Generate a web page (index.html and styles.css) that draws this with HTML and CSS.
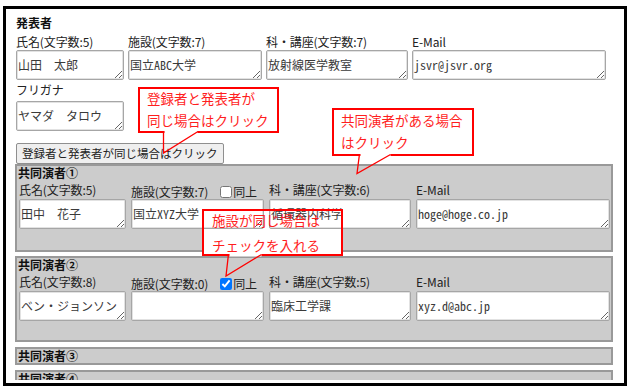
FILE: index.html
```html
<!DOCTYPE html>
<html lang="ja">
<head>
    <meta charset="utf-8">
    <title>発表者登録</title>
    <link rel="stylesheet" href="styles.css">
</head>
<body>
    <div class="frame">
        <div class="page">
            <div class="presenter">
                <h2 class="block-title">発表者</h2>
                <div class="fields">
                    <div class="field f-name">
                        <label>氏名(文字数:5)</label>
                        <textarea>山田　太郎</textarea>
                    </div>
                    <div class="field f-inst">
                        <label>施設(文字数:7)</label>
                        <textarea>国立ABC大学</textarea>
                    </div>
                    <div class="field f-dept">
                        <label>科・講座(文字数:7)</label>
                        <textarea>放射線医学教室</textarea>
                    </div>
                    <div class="field f-mail">
                        <label>E-Mail</label>
                        <textarea>jsvr@jsvr.org</textarea>
                    </div>
                </div>
                <div class="field f-name kana">
                    <label>フリガナ</label>
                    <textarea>ヤマダ　タロウ</textarea>
                </div>
                <button type="button" class="copy-btn">登録者と発表者が同じ場合はクリック</button>
            </div>

            <div class="co co-first">
                <h3 class="co-title">共同演者①</h3>
                <div class="fields">
                    <div class="field f-name">
                        <label>氏名(文字数:5)</label>
                        <textarea>田中　花子</textarea>
                    </div>
                    <div class="field f-inst">
                        <div class="label-line">
                            <label>施設(文字数:7)</label>
                            <input type="checkbox" id="same1">
                            <label for="same1">同上</label>
                        </div>
                        <textarea>国立XYZ大学</textarea>
                    </div>
                    <div class="field f-dept">
                        <label>科・講座(文字数:6)</label>
                        <textarea>循環器内科学</textarea>
                    </div>
                    <div class="field f-mail">
                        <label>E-Mail</label>
                        <textarea>hoge@hoge.co.jp</textarea>
                    </div>
                </div>
            </div>

            <div class="co">
                <h3 class="co-title">共同演者②</h3>
                <div class="fields">
                    <div class="field f-name">
                        <label>氏名(文字数:8)</label>
                        <textarea>ベン・ジョンソン</textarea>
                    </div>
                    <div class="field f-inst">
                        <div class="label-line">
                            <label>施設(文字数:0)</label>
                            <input type="checkbox" id="same2" checked>
                            <label for="same2">同上</label>
                        </div>
                        <textarea></textarea>
                    </div>
                    <div class="field f-dept">
                        <label>科・講座(文字数:5)</label>
                        <textarea>臨床工学課</textarea>
                    </div>
                    <div class="field f-mail">
                        <label>E-Mail</label>
                        <textarea>xyz.d@abc.jp</textarea>
                    </div>
                </div>
            </div>

            <div class="co closed">
                <h3 class="co-title">共同演者③</h3>
            </div>
            <div class="co closed">
                <h3 class="co-title">共同演者④</h3>
            </div>

            <!-- annotations -->
            <div class="note note-copy"><div class="note-body"><p>登録者と発表者が<br>同じ場合はクリック</p></div></div>
            <div class="note note-co"><div class="note-body"><p>共同演者がある場合<br>はクリック</p></div></div>
            <div class="note note-same"><div class="note-body"><p>施設が同じ場合は<br>チェックを入れる</p></div></div>

            <svg class="tails" width="618" height="371" viewBox="0 0 618 371">
                <rect x="158.5" y="121.5" width="33" height="3" fill="#fff"/>
                <polyline points="157.5,122 157.5,144 192,122.5" fill="none" stroke="#f00" stroke-width="1.3"/>
                <rect x="354.5" y="144.5" width="30" height="3" fill="#fff"/>
                <polyline points="353.5,145 351,164.5 384.5,145.5" fill="none" stroke="#f00" stroke-width="1.3"/>
                <rect x="223.5" y="244.5" width="32" height="3" fill="#fff"/>
                <polyline points="222.5,245 220,267 255.5,245.5" fill="none" stroke="#f00" stroke-width="1.3"/>
            </svg>
        </div>
    </div>
</body>
</html>
```

FILE: styles.css
```css
body {
    margin: 0;
    background-color: #fff;
    font-family: "Noto Sans CJK JP", "Noto Sans", sans-serif;
    font-size: 12px;
    color: #222;
}

.frame {
    width: 624px;
    height: 380px;
    margin: 6px 0 0 3px;
    border: 3px solid #000;
    padding-bottom: 3px;
    box-sizing: border-box;
}

.page {
    position: relative;
    height: 100%;
    overflow: hidden;
    padding: 7px 11px 0 9px;
    box-sizing: border-box;
}

.presenter {
    padding-left: 1px;
}

.block-title,
.co-title {
    margin: 0;
    font-size: 12px;
    font-weight: bold;
    line-height: 14px;
    height: 14px;
    color: #111;
}

.fields {
    display: flex;
    gap: 4px;
    margin-top: 5px;
}

.field {
    display: flex;
    flex-direction: column;
}

.field label {
    display: block;
    line-height: 14px;
    height: 14px;
    white-space: nowrap;
    letter-spacing: -0.1px;
}

.f-name { width: 108px; }
.f-inst { width: 134px; }
.f-dept { width: 142px; }
.f-mail { width: 194px; }

textarea {
    position: relative;
    z-index: 1;
    display: block;
    width: 100%;
    height: 30px;
    margin: 1px 0 0;
    padding: 6px 1px;
    box-sizing: border-box;
    border: 1px solid #a6a6a6;
    border-radius: 2px;
    box-shadow: inset 0 0 0 1px #e2e2e2;
    background-color: #fff;
    font-family: "Noto Sans Mono CJK JP", "Liberation Mono", "Noto Sans CJK JP", monospace;
    font-size: 12px;
    line-height: 16px;
    color: #3a3a3a;
    overflow: hidden;
    white-space: nowrap;
}

.kana {
    margin-top: 3px;
}

.kana textarea {
    margin-top: 4px;
}

.copy-btn {
    display: block;
    height: 21px;
    margin-top: 12px;
    padding: 0 5px;
    border: 1px solid #8f8f8f;
    border-radius: 2px;
    background-color: #efefef;
    font-family: "Noto Sans CJK JP", sans-serif;
    font-size: 11.5px;
    line-height: 19px;
    color: #222;
}

/* co-presenter blocks */
.co {
    margin-top: 5px;
    padding: 0 1px 19px;
    border: 2px solid #999;
    background-color: #ccc;
}

.co-first {
    margin-top: 0;
    padding-bottom: 21px;
}

.co-first + .co {
    margin-top: 4px;
}

.co.closed {
    padding-bottom: 0;
}

.co .fields {
    gap: 5px;
    margin: 3px 0 0 1px;
}

.co .f-name { width: 107px; }
.co .f-inst { width: 133px; }

.co textarea {
    margin-top: 2px;
}

.label-line {
    display: flex;
    align-items: center;
    height: 14px;
    padding-top: 2px;
}

.label-line + textarea {
    margin-top: 0;
}

.label-line input[type="checkbox"] {
    width: 12px;
    height: 12px;
    margin: 0 1px 0 12px;
}

/* red annotation balloons */
.note {
    position: absolute;
    background-color: #fff;
}

.note-body {
    position: relative;
    z-index: 3;
    height: 100%;
    box-sizing: border-box;
    border: 2px solid #f00;
    padding: 0 7px;
    color: #ff1e1e;
    font-size: 13.5px;
    line-height: 22px;
}

.note p {
    margin: -2px 0 0;
    white-space: nowrap;
}

.note-copy {
    left: 132px;
    top: 78px;
    width: 141px;
    height: 46px;
}

.note-co {
    left: 326px;
    top: 99px;
    width: 142px;
    height: 48px;
}

.note-co p {
    margin-top: -1px;
}

.note-same {
    left: 196px;
    top: 200px;
    width: 141px;
    height: 47px;
}

.note-same .note-body {
    padding-left: 8px;
    line-height: 24.5px;
}

.note-same p {
    margin-top: -3px;
}

.tails {
    position: absolute;
    left: 0;
    top: 0;
    z-index: 4;
    pointer-events: none;
}
```
